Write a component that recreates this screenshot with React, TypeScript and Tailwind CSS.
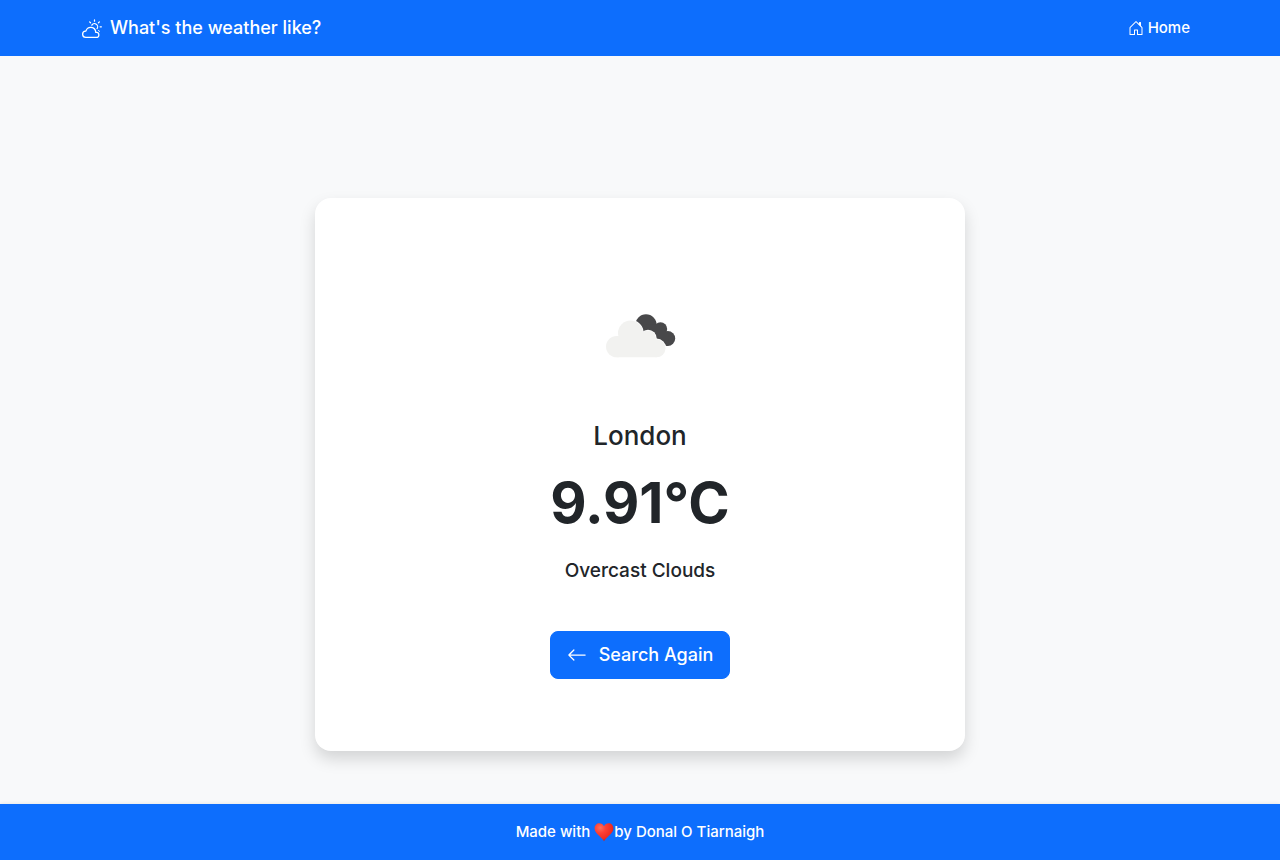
import { BsArrowLeft, BsCloudSun, BsHouseDoor } from "react-icons/bs";

function OvercastIcon() {
  return (
    <svg width="100" height="100" viewBox="0 0 100 100" role="img" aria-label="Overcast clouds">
      <g fill="#48484a">
        <circle cx="56" cy="39" r="10.7" />
        <circle cx="70.5" cy="43" r="6.7" />
        <circle cx="77.8" cy="52.5" r="7.4" />
        <path d="M56 39 L70 38 L79 50 L78 59.9 L66 58 Z" />
      </g>
      <g fill="#fff">
        <circle cx="40.5" cy="47" r="13.2" />
        <circle cx="58" cy="52.5" r="8.7" />
        <circle cx="66.5" cy="62.3" r="9.7" />
      </g>
      <g fill="#f2f2f0">
        <circle cx="26.7" cy="60.6" r="10.7" />
        <circle cx="40.5" cy="47" r="12.5" />
        <circle cx="58" cy="52.5" r="8" />
        <circle cx="66.5" cy="62.3" r="9" />
        <path d="M26.7 71.3 V50 H54 L66.5 60 V71.3 Z" />
      </g>
    </svg>
  );
}

function Heart() {
  return (
    <svg className="inline-block align-[-5px]" width="20" height="20" viewBox="0 0 20 20" role="img" aria-label="love">
      <defs>
        <radialGradient id="heart" cx="0.3" cy="0.25" r="0.85">
          <stop offset="0" stopColor="#ff6f5c" />
          <stop offset="0.35" stopColor="#fd4034" />
          <stop offset="0.75" stopColor="#ee2c22" />
          <stop offset="1" stopColor="#b8130c" />
        </radialGradient>
      </defs>
      <path
        fill="url(#heart)"
        d="M10 19.2 C8.8 17 6.2 14.9 3.8 12.5 C1.8 10.5 .6 8.7 .6 6.3 C.6 3.4 2.7 1.3 5.3 1.3 C7.4 1.3 9.1 2.4 10 4.3 C10.9 2.4 12.6 1.3 14.7 1.3 C17.3 1.3 19.4 3.4 19.4 6.3 C19.4 8.7 18.2 10.5 16.2 12.5 C13.8 14.9 11.2 17 10 19.2 Z"
      />
    </svg>
  );
}

export default function App() {
  return (
    <div className="flex min-h-screen flex-col bg-[#f8f9fa] font-['Inter',sans-serif] text-base text-[#212529]">
      <header className="bg-[#0d6efd] text-white">
        <nav className="mx-auto flex h-14 w-full max-w-[1140px] items-center justify-between px-3">
          <a href="#" className="flex items-center gap-2 text-[18px] leading-6 font-medium">
            <BsCloudSun size={20} aria-hidden="true" />
            What's the weather like?
          </a>
          <a href="#" className="flex items-center gap-1 px-2 text-[15px] leading-6 font-medium">
            <BsHouseDoor size={16} aria-hidden="true" />
            Home
          </a>
        </nav>
      </header>

      <main className="flex flex-1 items-center justify-center px-3 pt-22">
        <section className="flex w-full max-w-[650px] flex-col items-center rounded-2xl bg-white pt-22 pb-18 text-center shadow-[0_8px_16px_rgba(0,0,0,0.15)]">
          <OvercastIcon />
          <h1 className="mt-8 text-[26px] leading-9 font-medium">London</h1>
          <p className="mt-4 text-[56px] leading-[67px] font-bold">9.91°C</p>
          <p className="mt-[22px] text-[19px] leading-6 font-medium">Overcast Clouds</p>
          <button
            type="button"
            className="mt-12 flex h-12 items-center gap-3 rounded-lg border border-[#0d6efd] bg-[#0d6efd] px-4 text-[18px] leading-6 font-medium text-white"
          >
            <BsArrowLeft size={20} aria-hidden="true" />
            Search Again
          </button>
        </section>
      </main>

      <footer className="flex h-14 items-center justify-center bg-[#0d6efd] text-[15px] leading-6 font-medium text-white shadow-[0_0_4px_rgba(0,0,0,0.1)]">
        <p>
          Made with <Heart />by Donal O Tiarnaigh
        </p>
      </footer>
    </div>
  );
}
